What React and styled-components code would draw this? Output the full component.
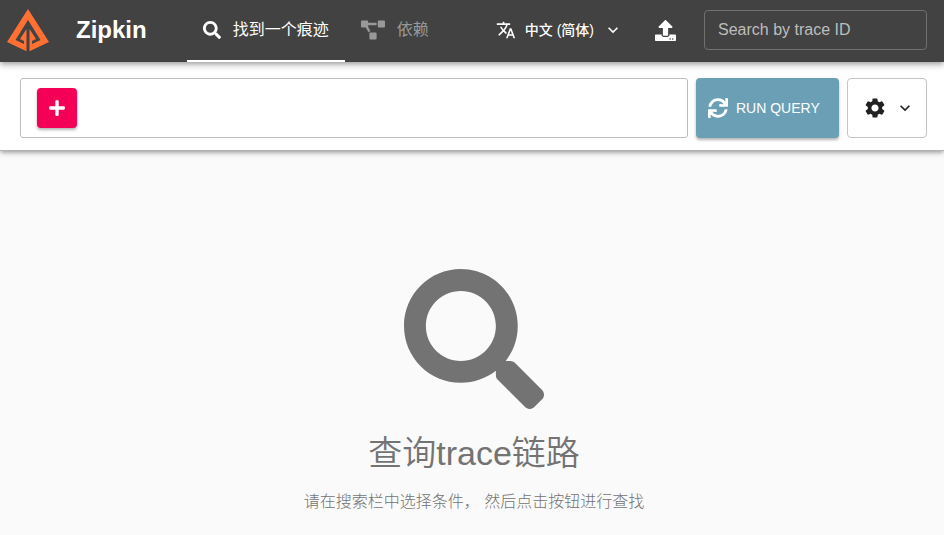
import React from "react";
import styled, { createGlobalStyle } from "styled-components";
import { FaSearch, FaProjectDiagram, FaUpload, FaPlus, FaSync } from "react-icons/fa";
import { MdTranslate, MdSettings, MdKeyboardArrowDown } from "react-icons/md";

const GlobalStyle = createGlobalStyle`
  *, *::before, *::after { box-sizing: border-box; }
  body {
    margin: 0;
    background: #fafafa;
    font-family: "Liberation Sans", "Noto Sans CJK SC", sans-serif;
    font-size: 16px;
    line-height: 24px;
  }
  button, input { font: inherit; }
  svg { display: block; flex: none; }
`;

const AppBar = styled.header`
  display: flex;
  align-items: center;
  height: 62px;
  padding: 0 17px 2px 0;
  background: #424242;
  color: #fff;
  position: relative;
  z-index: 2;
  box-shadow: 0 2px 4px -1px rgba(0, 0, 0, 0.2), 0 4px 5px rgba(0, 0, 0, 0.14), 0 1px 10px rgba(0, 0, 0, 0.12);
`;

const Brand = styled.a`
  display: flex;
  align-items: center;
  gap: 26px;
  padding-left: 6px;
  color: inherit;
  text-decoration: none;
`;

const BrandName = styled.strong`
  font-size: 24px;
  line-height: 32px;
`;

const Nav = styled.nav`
  display: flex;
  align-self: stretch;
  margin: 0 0 -2px 40px;
`;

const NavLink = styled.a`
  display: flex;
  align-items: center;
  gap: 12px;
  padding: 0 16px 2px;
  color: ${(p) => (p.$active ? "#fff" : "#999")};
  box-shadow: ${(p) => (p.$active ? "inset 0 -2px #fff" : "none")};
  text-decoration: none;
  white-space: nowrap;
`;

const Tools = styled.div`
  display: flex;
  align-items: center;
  margin-left: auto;
`;

const LanguageButton = styled.button`
  display: flex;
  align-items: center;
  gap: 9px;
  padding: 8px;
  border: 0;
  background: none;
  color: inherit;
  font-size: 14px;
  font-weight: 500;
  white-space: nowrap;
`;

const UploadButton = styled.button`
  display: flex;
  margin: 0 16px 0 12px;
  padding: 12px;
  border: 0;
  background: none;
  color: inherit;
`;

const TraceInput = styled.input`
  width: 223px;
  height: 40px;
  padding: 0 13px;
  border: 1px solid #707070;
  border-radius: 4px;
  background: transparent;
  color: #fff;
  &::placeholder { color: #bdbdbd; opacity: 1; }
`;

const QueryBar = styled.section`
  display: flex;
  gap: 8px;
  padding: 16px 17px 12px 20px;
  background: #fff;
  position: relative;
  z-index: 1;
  border-bottom: 1px solid #b0b4b3;
  box-shadow: 0 2px 4px -1px rgba(0, 0, 0, 0.3), 0 3px 5px rgba(0, 0, 0, 0.12);
`;

const Criteria = styled.div`
  display: flex;
  flex: 1;
  align-items: center;
  height: 60px;
  padding: 0 16px;
  border: 1px solid #bdbdbd;
  border-radius: 3px;
`;

const AddButton = styled.button`
  display: grid;
  place-items: center;
  width: 40px;
  height: 40px;
  padding: 0;
  border: 0;
  border-radius: 4px;
  background: #f50057;
  color: #fff;
  box-shadow: 0 2px 3px rgba(0, 0, 0, 0.3);
`;

const RunButton = styled.button`
  display: flex;
  align-items: center;
  gap: 8px;
  width: 143px;
  padding: 0 12px;
  border: 0;
  border-radius: 4px;
  background: #6a9fb5;
  color: #fff;
  font-size: 14px;
  white-space: nowrap;
  box-shadow: 0 2px 3px rgba(0, 0, 0, 0.3);
`;

const SettingsButton = styled.button`
  display: flex;
  align-items: center;
  gap: 8px;
  width: 80px;
  padding: 0 15px;
  border: 1px solid #c4c4c4;
  border-radius: 4px;
  background: #fff;
  color: #212121;
`;

const Empty = styled.main`
  display: flex;
  flex-direction: column;
  align-items: center;
  padding: 118px 16px 20px 20px;
  color: #737373;
  text-align: center;
`;

const Title = styled.h1`
  margin: 24px 0 17px;
  font-size: 34px;
  font-weight: 350;
  line-height: 40px;
`;

const Hint = styled.p`
  margin: 0;
  font-weight: 300;
`;

function Logo() {
  return (
    <svg width="44" height="44" viewBox="0 0 44 44" aria-hidden="true">
      <path fill="#ff7032" d="M22 1 43 34 24 43H20L1 34Z" />
      <path fill="#424242" d="M22 12 34.500 32 26 36V33L30 31 23.500 21V43H20.500V21L14 31 18 33V36L9.500 32Z" />
    </svg>
  );
}

export default function App() {
  return (
    <>
      <GlobalStyle />
      <AppBar>
        <Brand href="#">
          <Logo />
          <BrandName>Zipkin</BrandName>
        </Brand>
        <Nav>
          <NavLink href="#traces" $active>
            <FaSearch size={18} />
            找到一个痕迹
          </NavLink>
          <NavLink href="#dependencies">
            <FaProjectDiagram size={24} />
            依赖
          </NavLink>
        </Nav>
        <Tools>
          <LanguageButton type="button">
            <MdTranslate size={20} />
            中文 (简体)
            <MdKeyboardArrowDown size={20} />
          </LanguageButton>
          <UploadButton type="button" aria-label="Upload">
            <FaUpload size={21} />
          </UploadButton>
          <TraceInput type="text" placeholder="Search by trace ID" aria-label="Search by trace ID" />
        </Tools>
      </AppBar>
      <QueryBar>
        <Criteria>
          <AddButton type="button" aria-label="Add">
            <FaPlus size={18} />
          </AddButton>
        </Criteria>
        <RunButton type="button">
          <FaSync size={20} />
          RUN QUERY
        </RunButton>
        <SettingsButton type="button" aria-label="Settings">
          <MdSettings size={24} />
          <MdKeyboardArrowDown size={20} />
        </SettingsButton>
      </QueryBar>
      <Empty>
        <FaSearch size={140} />
        <Title>查询trace链路</Title>
        <Hint>请在搜索栏中选择条件， 然后点击按钮进行查找</Hint>
      </Empty>
    </>
  );
}
